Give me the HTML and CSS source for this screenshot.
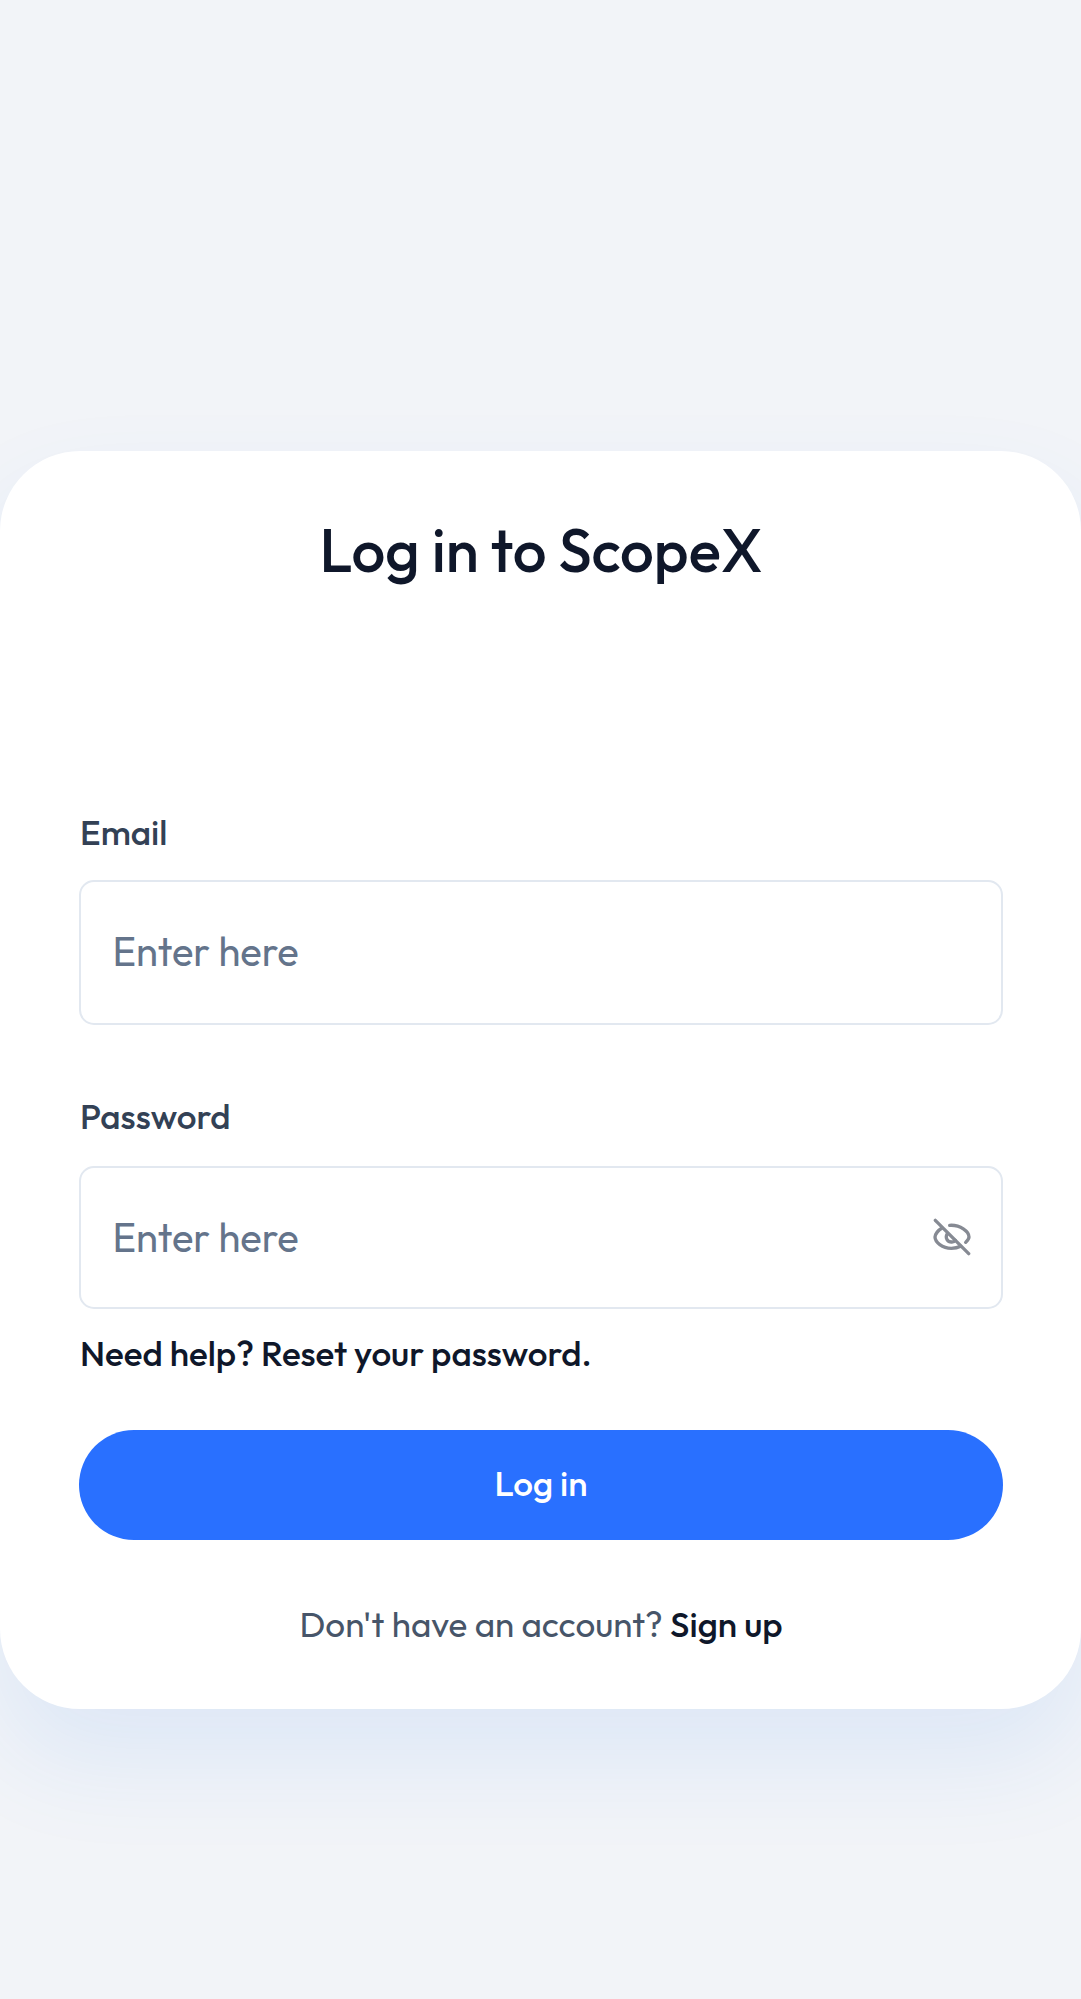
FILE: index.html
```html
<!DOCTYPE html>
<html lang="en">
<head>
<meta charset="utf-8">
<title>Log in to ScopeX</title>
<link rel="stylesheet" href="styles.css">
</head>
<body>
<main class="card">
  <h1 class="title">Log in to ScopeX</h1>
  <form class="form">
    <label class="label" for="email">Email</label>
    <div class="field field-email">
      <input class="input" id="email" type="email" placeholder="Enter here">
    </div>
    <label class="label label-password" for="password">Password</label>
    <div class="field field-password">
      <input class="input" id="password" type="password" placeholder="Enter here">
      <svg class="eye" viewBox="0 0 114 114" fill="none" stroke="#868a93" stroke-width="10" stroke-linecap="round" stroke-linejoin="round" aria-hidden="true">
        <path d="M7 7L107 107"/>
        <path d="M27 30C15 37 6 49 6 57C6 72 28 91 55 91C65 91 75 89 83 85"/>
        <path d="M50 22C82 20 108 40 108 57C108 62 103 68 98 73"/>
        <path d="M43 47C35 60 44 73 57 72C61 72 65 70 67 67"/>
      </svg>
    </div>
    <a class="reset">Need help? Reset your password.</a>
    <button class="submit" type="button">Log in</button>
  </form>
  <p class="signup">Don't have an account? <a class="signup-link">Sign up</a></p>
</main>
</body>
</html>
```
FILE: styles.css
```css
* {
  box-sizing: border-box;
}

body {
  margin: 0;
  min-height: 1999px;
  padding-top: 451px;
  background: #f2f4f8;
  font-family: "Outfit", "Lato", sans-serif;
  overflow-x: hidden;
}

.card {
  height: 1258px;
  padding: 61px 78px 0 79px;
  border-radius: 80px;
  background: #fff;
  box-shadow: 0 50px 100px rgba(41, 124, 238, 0.1);
}

.title {
  margin: 0 0 222px;
  font-size: 60px;
  font-weight: 500;
  line-height: 76px;
  color: #0f172a;
  text-align: center;
}

.form {
  display: flex;
  flex-direction: column;
}

.label {
  padding-left: 1px;
  font-size: 35px;
  font-weight: 500;
  line-height: 44px;
  color: #334155;
}

.label-password {
  margin-top: 69px;
}

.field {
  display: flex;
  align-items: center;
  border: 2px solid #e2e8f0;
  border-radius: 15px;
  padding: 0 30px 0 31.5px;
}

.field-email {
  height: 145px;
  margin-top: 26px;
  padding-bottom: 3px;
}

.field-password {
  height: 143px;
  margin-top: 28px;
  padding-bottom: 1px;
}

.input {
  flex: 1;
  min-width: 0;
  height: 52px;
  padding: 0;
  border: 0;
  outline: 0;
  background: none;
  font: 400 40px/52px "Outfit", "Lato", sans-serif;
  color: #0f172a;
}

.input::placeholder {
  color: #64748b;
  opacity: 1;
}

.eye {
  width: 38px;
  height: 38px;
  margin-bottom: 1px;
}

.reset {
  margin-top: 22px;
  padding-left: 1px;
  font-size: 35px;
  font-weight: 500;
  line-height: 44px;
  color: #0f172a;
}

.submit {
  height: 110px;
  margin-top: 55px;
  padding: 0 0 4px;
  border: 0;
  border-radius: 55px;
  background: #2970ff;
  font: 500 35px/44px "Outfit", "Lato", sans-serif;
  color: #fff;
}

.signup {
  margin: 62px 0 0;
  font-size: 35px;
  font-weight: 400;
  line-height: 44px;
  color: #475569;
  text-align: center;
}

.signup-link {
  font-weight: 500;
  color: #0f172a;
}
```
